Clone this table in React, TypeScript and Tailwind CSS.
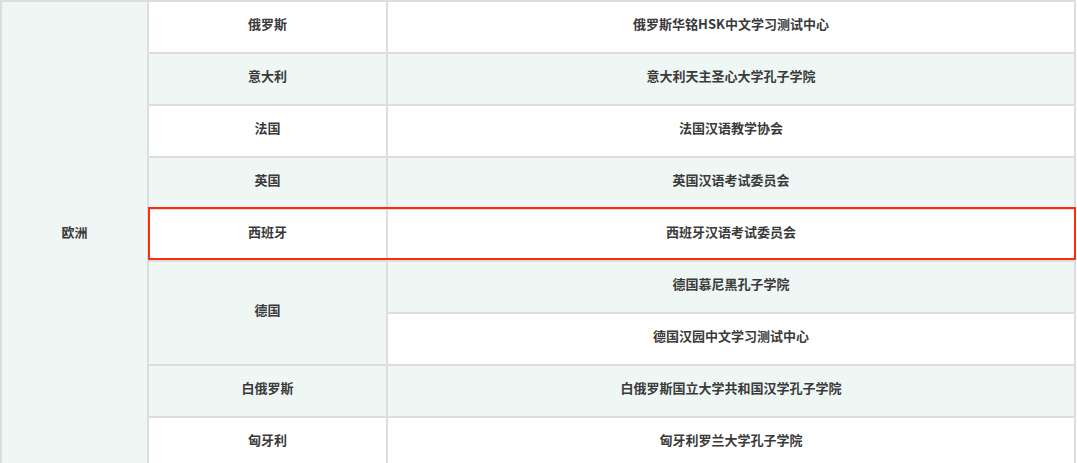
import React from "react";

type Row = { country: string; orgs: string[]; bgs: string[] };

const rows: Row[] = [
  { country: "俄罗斯", orgs: ["俄罗斯华铭HSK中文学习测试中心"], bgs: ["bg-white"] },
  { country: "意大利", orgs: ["意大利天主圣心大学孔子学院"], bgs: ["bg-[#eef7f3]"] },
  { country: "法国", orgs: ["法国汉语教学协会"], bgs: ["bg-white"] },
  { country: "英国", orgs: ["英国汉语考试委员会"], bgs: ["bg-[#eef7f3]"] },
  { country: "西班牙", orgs: ["西班牙汉语考试委员会"], bgs: ["bg-white"] },
  { country: "德国", orgs: ["德国慕尼黑孔子学院", "德国汉园中文学习测试中心"], bgs: ["bg-[#eef7f3]", "bg-white"] },
  { country: "白俄罗斯", orgs: ["白俄罗斯国立大学共和国汉学孔子学院"], bgs: ["bg-[#eef7f3]"] },
  { country: "匈牙利", orgs: ["匈牙利罗兰大学孔子学院"], bgs: ["bg-white"] },
];

const cell = "border-2 border-[#dddddd] text-center align-middle p-0 pb-[7px] leading-[19px]";

export default function App() {
  const totalRows = rows.reduce((s, r) => s + r.orgs.length, 0);
  const trs: React.ReactNode[] = [];
  rows.forEach((r, ri) => {
    r.orgs.forEach((org, oi) => {
      trs.push(
        <tr key={`${ri}-${oi}`} className="h-[52px]">
          {ri === 0 && oi === 0 && (
            <td rowSpan={totalRows} className={`${cell} bg-[#eef7f3]`}>
              欧洲
            </td>
          )}
          {oi === 0 && (
            <td rowSpan={r.orgs.length} className={`${cell} ${r.bgs[0]}`}>
              {r.country}
            </td>
          )}
          <td className={`${cell} ${r.bgs[oi]}`}>{org}</td>
        </tr>
      );
    });
  });

  return (
    <div
      className="relative w-[1077px] bg-white text-[13px] font-semibold text-[#3a3a3a]"
      style={{ fontFamily: '"Noto Sans CJK SC", "Noto Sans", sans-serif' }}
    >
      <table className="w-[1076px] table-fixed border-collapse">
        <colgroup>
          <col className="w-[147px]" />
          <col className="w-[239px]" />
          <col />
        </colgroup>
        <tbody>{trs}</tbody>
      </table>
      <div className="pointer-events-none absolute left-[148px] top-[207px] h-[53px] w-[928px] border-2 border-[#ff2a10]" />
    </div>
  );
}
